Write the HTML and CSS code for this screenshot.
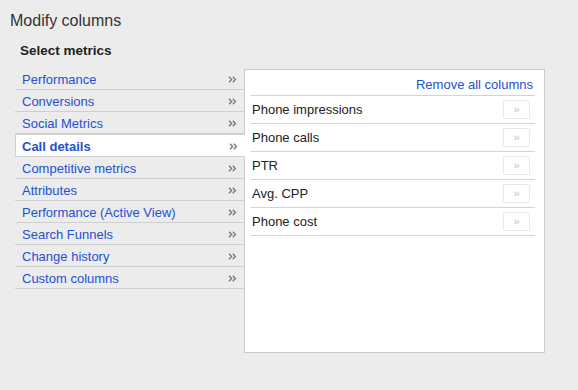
FILE: index.html
```html
<!DOCTYPE html>
<html>
<head>
<meta charset="utf-8">
<link rel="stylesheet" href="styles.css">
</head>
<body>
<h1 class="title">Modify columns</h1>
<h2 class="subtitle">Select metrics</h2>
<div class="picker">
  <ul class="cats">
    <li class="cat"><span class="cat-name">Performance</span><svg class="chev" width="9" height="7" viewBox="0 0 9 7"><path d="M1 .8 3.6 3.5 1 6.2M4.8 .8 7.4 3.5 4.8 6.2"/></svg></li>
    <li class="cat"><span class="cat-name">Conversions</span><svg class="chev" width="9" height="7" viewBox="0 0 9 7"><path d="M1 .8 3.6 3.5 1 6.2M4.8 .8 7.4 3.5 4.8 6.2"/></svg></li>
    <li class="cat"><span class="cat-name">Social Metrics</span><svg class="chev" width="9" height="7" viewBox="0 0 9 7"><path d="M1 .8 3.6 3.5 1 6.2M4.8 .8 7.4 3.5 4.8 6.2"/></svg></li>
    <li class="cat active"><span class="cat-name">Call details</span><svg class="chev" width="9" height="7" viewBox="0 0 9 7"><path d="M1 .8 3.6 3.5 1 6.2M4.8 .8 7.4 3.5 4.8 6.2"/></svg></li>
    <li class="cat"><span class="cat-name">Competitive metrics</span><svg class="chev" width="9" height="7" viewBox="0 0 9 7"><path d="M1 .8 3.6 3.5 1 6.2M4.8 .8 7.4 3.5 4.8 6.2"/></svg></li>
    <li class="cat"><span class="cat-name">Attributes</span><svg class="chev" width="9" height="7" viewBox="0 0 9 7"><path d="M1 .8 3.6 3.5 1 6.2M4.8 .8 7.4 3.5 4.8 6.2"/></svg></li>
    <li class="cat"><span class="cat-name">Performance (Active View)</span><svg class="chev" width="9" height="7" viewBox="0 0 9 7"><path d="M1 .8 3.6 3.5 1 6.2M4.8 .8 7.4 3.5 4.8 6.2"/></svg></li>
    <li class="cat"><span class="cat-name">Search Funnels</span><svg class="chev" width="9" height="7" viewBox="0 0 9 7"><path d="M1 .8 3.6 3.5 1 6.2M4.8 .8 7.4 3.5 4.8 6.2"/></svg></li>
    <li class="cat"><span class="cat-name">Change history</span><svg class="chev" width="9" height="7" viewBox="0 0 9 7"><path d="M1 .8 3.6 3.5 1 6.2M4.8 .8 7.4 3.5 4.8 6.2"/></svg></li>
    <li class="cat"><span class="cat-name">Custom columns</span><svg class="chev" width="9" height="7" viewBox="0 0 9 7"><path d="M1 .8 3.6 3.5 1 6.2M4.8 .8 7.4 3.5 4.8 6.2"/></svg></li>
  </ul>
  <div class="panel">
    <div class="panel-head"><a class="remove-all" href="#">Remove all columns</a></div>
    <ul class="cols">
      <li class="col"><span class="col-name">Phone impressions</span><button class="move">»</button></li>
      <li class="col"><span class="col-name">Phone calls</span><button class="move">»</button></li>
      <li class="col"><span class="col-name">PTR</span><button class="move">»</button></li>
      <li class="col"><span class="col-name">Avg. CPP</span><button class="move">»</button></li>
      <li class="col"><span class="col-name">Phone cost</span><button class="move">»</button></li>
    </ul>
  </div>
</div>
</body>
</html>
```
FILE: styles.css
```css
html, body {
  margin: 0;
  padding: 0;
  background: #ececec;
  font-family: Arial, "Liberation Sans", sans-serif;
  color: #222;
}

.title {
  margin: 0;
  padding: 11px 0 0 10px;
  font-size: 16px;
  line-height: 20px;
  font-weight: normal;
  color: #333;
}

.subtitle {
  margin: 0;
  padding: 12px 0 0 20px;
  font-size: 13.5px;
  line-height: 16px;
  font-weight: bold;
  color: #222;
}

.picker {
  display: flex;
  align-items: flex-start;
  margin: 9px 0 0 15px;
}

.cats {
  list-style: none;
  margin: 0;
  padding: 0;
  width: 229px;
}

.cat {
  display: flex;
  align-items: center;
  justify-content: space-between;
  height: 20px;
  padding: 1px 7px 0 7px;
  border-bottom: 1px solid #cfcfcf;
  font-size: 13px;
  color: #2450d2;
}

.cat.active {
  position: relative;
  z-index: 1;
  margin-right: -1px;
  padding-left: 6px;
  background: #fff;
  border-top: 1px solid #cfcfcf;
  border-left: 1px solid #cfcfcf;
  font-weight: bold;
}

.chev {
  display: block;
  fill: none;
  stroke: #7a7a7a;
  stroke-width: 1.4;
}

.panel {
  margin-top: 1px;
  height: 282px;
  border: 1px solid #cbcbcb;
  background: #fff;
  padding: 0 9px 0 6px;
  box-sizing: content-box;
  width: 284px;
}

.panel-head {
  display: flex;
  justify-content: flex-end;
  padding: 7px 2px 3px 0;
  border-bottom: 1px solid #d3d3d3;
}

.remove-all {
  font-size: 13px;
  line-height: 15px;
  color: #2450d2;
  text-decoration: none;
}

.cols {
  list-style: none;
  margin: 0;
  padding: 0;
}

.col {
  display: flex;
  align-items: center;
  justify-content: space-between;
  height: 27px;
  padding: 0 5px 0 1px;
  border-bottom: 1px solid #d3d3d3;
  font-size: 13px;
}

.move {
  width: 27px;
  height: 19px;
  margin: 0;
  padding: 0;
  border: 1px solid #e8e8e8;
  border-radius: 2px;
  background: #fff;
  color: #c4c4c4;
  font-family: Arial, "Liberation Sans", sans-serif;
  font-size: 11px;
  line-height: 15px;
}
```
